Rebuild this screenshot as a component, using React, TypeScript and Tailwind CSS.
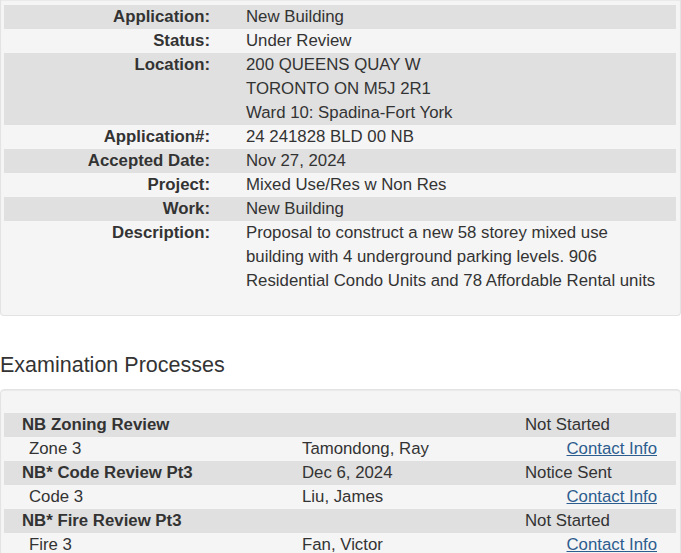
const details: { label: string; lines: string[] }[] = [
  { label: 'Application:', lines: ['New Building'] },
  { label: 'Status:', lines: ['Under Review'] },
  { label: 'Location:', lines: ['200 QUEENS QUAY W', 'TORONTO ON M5J 2R1', 'Ward 10: Spadina-Fort York'] },
  { label: 'Application#:', lines: ['24 241828 BLD 00 NB'] },
  { label: 'Accepted Date:', lines: ['Nov 27, 2024'] },
  { label: 'Project:', lines: ['Mixed Use/Res w Non Res'] },
  { label: 'Work:', lines: ['New Building'] },
  {
    label: 'Description:',
    lines: [
      'Proposal to construct a new 58 storey mixed use',
      'building with 4 underground parking levels. 906',
      'Residential Condo Units and 78 Affordable Rental units',
    ],
  },
]

const processes = [
  { name: 'NB Zoning Review', date: '', status: 'Not Started', group: 'Zone 3', examiner: 'Tamondong, Ray' },
  { name: 'NB* Code Review Pt3', date: 'Dec 6, 2024', status: 'Notice Sent', group: 'Code 3', examiner: 'Liu, James' },
  { name: 'NB* Fire Review Pt3', date: '', status: 'Not Started', group: 'Fire 3', examiner: 'Fan, Victor' },
]

export default function App() {
  return (
    <div className="w-[681px] bg-white text-[16.8px] leading-[24px] text-[#333]" style={{ fontFamily: '"Liberation Sans", Arial, sans-serif' }}>
      {/* Application details */}
      <div className="w-[681px] rounded-b-[4px] border border-t-0 border-[#e3e3e3] bg-[#f5f5f5] pt-[5px] pr-[4px] pb-[22px] pl-[3px] shadow-[inset_0_1px_1px_rgba(0,0,0,0.05)]">
        {details.map((d, i) => (
          <div key={d.label} className={`grid grid-cols-[206px_1fr] ${i % 2 === 0 ? 'bg-[#e0e0e0]' : ''}`}>
            <div className="whitespace-nowrap text-right font-bold">{d.label}</div>
            <div className="pl-[36px]">
              {d.lines.map((l) => (
                <div key={l} className="whitespace-nowrap">{l}</div>
              ))}
            </div>
          </div>
        ))}
      </div>

      <h3 className="mt-[37px] text-[21.5px] leading-[24px] font-normal">Examination Processes</h3>

      {/* Examination processes */}
      <div className="mt-[12px] w-[681px] rounded-[4px] border border-[#e3e3e3] bg-[#f5f5f5] pt-[23px] pr-[4px] pl-[3px] pb-[20px] shadow-[inset_0_1px_1px_rgba(0,0,0,0.05)]">
        {processes.map((p) => (
          <div key={p.name}>
            <div className="grid grid-cols-[298px_223px_1fr] bg-[#e0e0e0]">
              <div className="pl-[18px] font-bold">{p.name}</div>
              <div>{p.date}</div>
              <div>{p.status}</div>
            </div>
            <div className="grid grid-cols-[298px_223px_1fr]">
              <div className="pl-[25px]">{p.group}</div>
              <div>{p.examiner}</div>
              <div className="pr-[19px] text-right">
                <a href="#" className="text-[#2c5d8f] underline">Contact Info</a>
              </div>
            </div>
          </div>
        ))}
      </div>
    </div>
  )
}
